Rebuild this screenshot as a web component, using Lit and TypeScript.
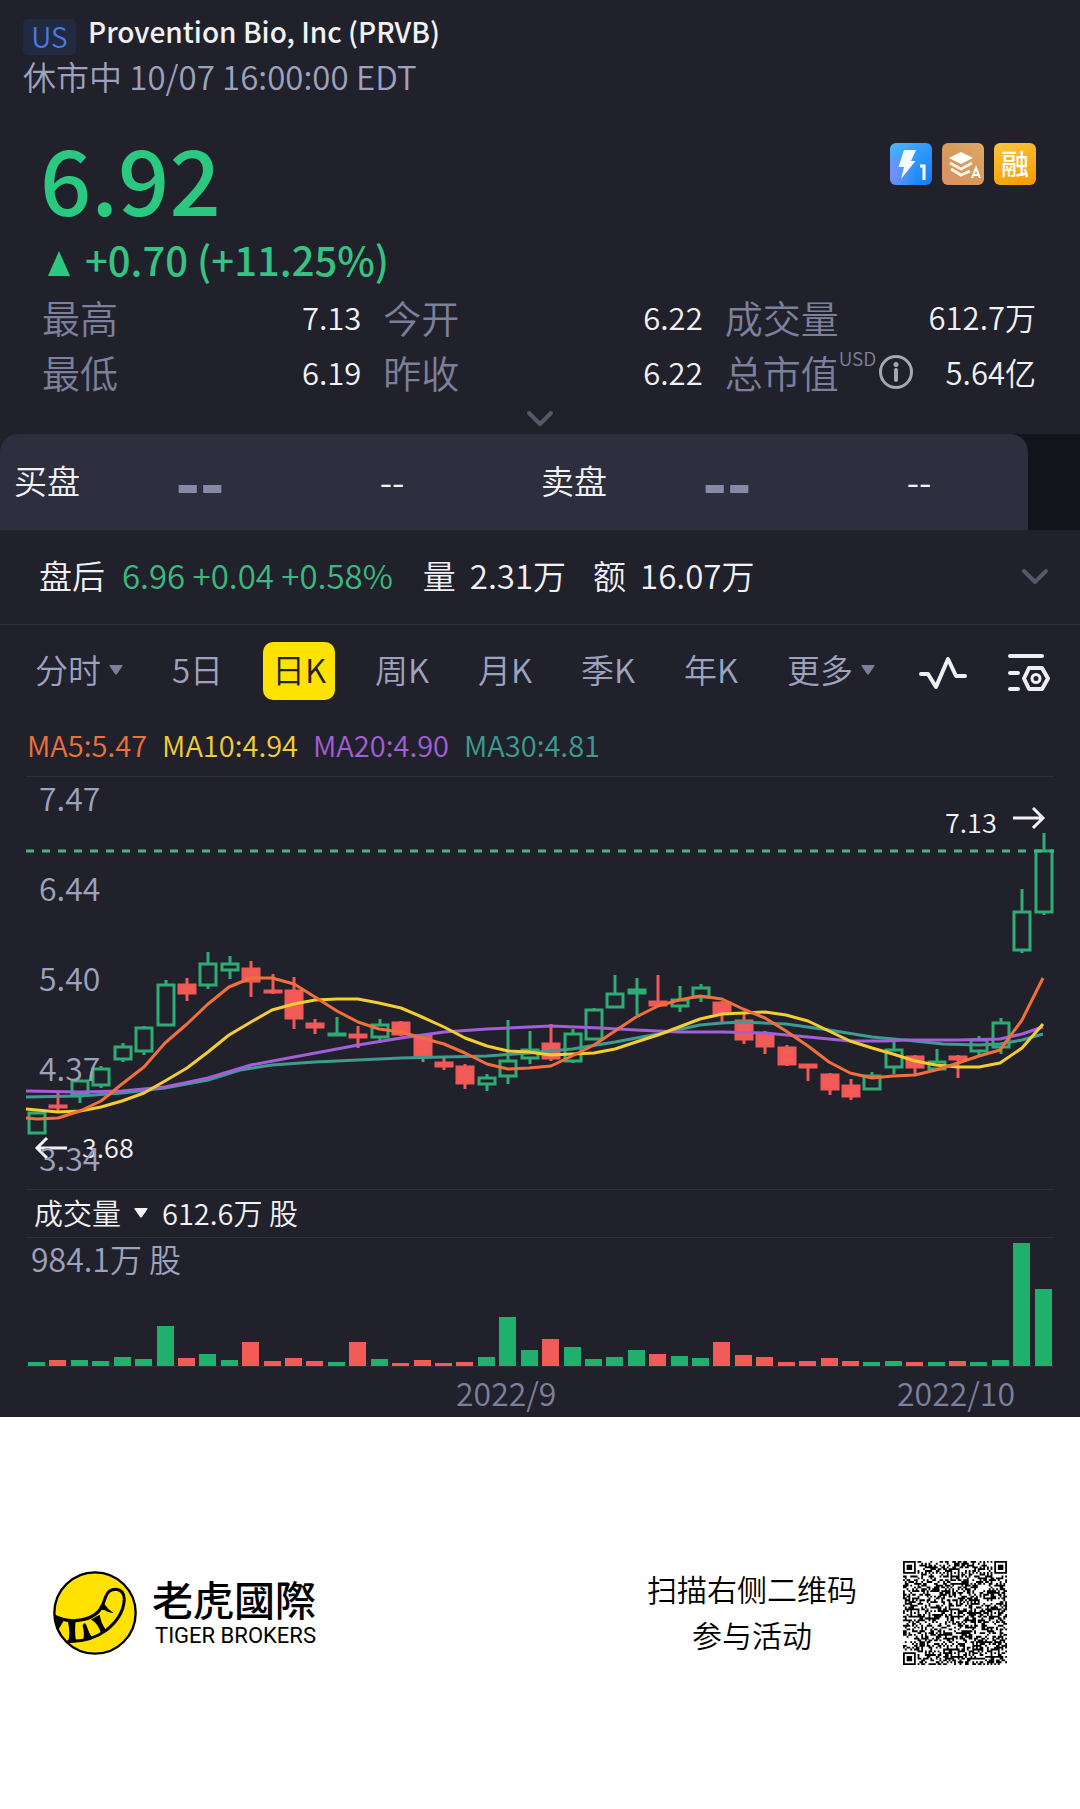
import { LitElement, html, svg, css } from "lit";
import { customElement } from "lit/decorators.js";
import { classMap } from "lit/directives/class-map.js";

type Candle = [up: 0 | 1, high: number, top: number, bottom: number, low: number];

const FIRST_X = 37;
const STEP = 21.42;

const CANDLES: Candle[] = [
  [1, 1112, 1112, 1134, 1134], [0, 1093, 1105, 1107, 1111], [1, 1080, 1080, 1095, 1103],
  [1, 1066, 1068, 1086, 1088], [1, 1043, 1046, 1060, 1062], [1, 1026, 1027, 1052, 1055],
  [1, 980, 984, 1026, 1026], [0, 978, 984, 994, 1001], [1, 952, 963, 986, 989],
  [1, 956, 963, 971, 979], [0, 961, 968, 982, 997], [0, 974, 990, 992, 994],
  [0, 977, 990, 1019, 1029], [0, 1019, 1023, 1028, 1034], [1, 1017, 1033, 1035, 1036],
  [0, 1026, 1034, 1038, 1048], [1, 1019, 1024, 1038, 1041], [0, 1021, 1022, 1035, 1036],
  [0, 1034, 1035, 1056, 1062], [0, 1058, 1062, 1067, 1070], [0, 1064, 1066, 1084, 1089],
  [1, 1074, 1077, 1085, 1091], [1, 1020, 1060, 1077, 1084], [1, 1031, 1049, 1059, 1064],
  [0, 1024, 1043, 1059, 1061], [1, 1029, 1033, 1062, 1063], [1, 1008, 1009, 1040, 1040],
  [1, 975, 993, 1008, 1008], [1, 978, 989, 994, 1015], [0, 975, 1001, 1006, 1007],
  [1, 986, 999, 1007, 1012], [1, 984, 987, 998, 1002], [0, 1001, 1002, 1014, 1022],
  [0, 1014, 1020, 1040, 1044], [0, 1031, 1034, 1047, 1054], [0, 1045, 1047, 1065, 1066],
  [0, 1064, 1064, 1068, 1081], [0, 1073, 1074, 1090, 1095], [0, 1079, 1085, 1097, 1100],
  [1, 1072, 1075, 1090, 1090], [1, 1042, 1049, 1068, 1074], [0, 1055, 1056, 1068, 1074],
  [1, 1049, 1061, 1070, 1071], [0, 1055, 1056, 1060, 1078], [1, 1036, 1039, 1052, 1055],
  [1, 1018, 1022, 1048, 1054], [1, 889, 911, 951, 953], [1, 833, 850, 913, 915],
];

const VOLUMES = [
  4, 6, 6, 5, 9, 7, 40, 8, 12, 6, 24, 5, 8, 5, 4, 24, 7, 3, 6, 3, 4, 9, 49, 16,
  27, 19, 7, 9, 16, 12, 10, 8, 24, 11, 9, 4, 5, 8, 5, 4, 5, 4, 4, 5, 4, 6, 123, 77,
];

const AVERAGES = [
  {
    name: "ma30", label: "MA30:4.81",
    points: "26,1097 80,1096 122,1093 165,1088 208,1080 240,1070 272,1065 315,1062 358,1060 401,1058 444,1057 487,1056 529,1053 572,1049 615,1042 658,1034 700,1025 722,1023 743,1022 786,1024 829,1030 872,1037 915,1041 943,1044 979,1045 1000,1044 1022,1040 1043,1034",
  },
  {
    name: "ma20", label: "MA20:4.90",
    points: "26,1091 80,1092 122,1091 165,1087 208,1078 251,1065 294,1057 337,1049 358,1045 401,1038 444,1032 487,1029 529,1027 551,1026 600,1028 636,1030 679,1032 722,1032 765,1033 808,1037 850,1041 886,1041 905,1040 958,1040 1000,1039 1022,1034 1043,1027",
  },
  {
    name: "ma10", label: "MA10:4.94",
    points: "26,1109 58,1112 80,1111 101,1107 122,1101 144,1093 165,1081 187,1068 208,1052 229,1035 251,1022 272,1010 294,1004 315,1000 337,999 358,999 379,1003 401,1008 422,1017 444,1027 465,1038 487,1046 508,1051 529,1052 551,1055 572,1054 594,1053 615,1049 636,1042 658,1035 679,1027 700,1019 722,1014 743,1013 765,1012 786,1015 808,1021 829,1031 850,1041 872,1048 893,1054 915,1061 936,1065 958,1067 979,1067 1000,1063 1022,1048 1043,1024",
  },
  {
    name: "ma5", label: "MA5:5.47",
    points: "26,1118 37,1119 58,1118 80,1111 101,1101 122,1084 144,1067 165,1043 187,1024 208,1004 229,987 251,978 272,978 294,984 315,997 337,1011 358,1022 379,1029 401,1032 422,1038 444,1044 465,1053 487,1064 508,1069 529,1068 551,1066 572,1056 594,1045 615,1031 636,1017 658,1006 679,1000 700,996 722,999 743,1009 765,1018 786,1031 808,1046 829,1062 850,1073 872,1078 893,1076 915,1075 936,1070 958,1063 979,1056 1000,1050 1022,1020 1043,978",
  },
];

const TABS = [
  { label: "分时", menu: true }, { label: "5日" }, { label: "日K", active: true },
  { label: "周K" }, { label: "月K" }, { label: "季K" }, { label: "年K" },
  { label: "更多", menu: true },
];

const caret = (cls: string) => html`<svg class=${cls} viewBox="0 0 14 10" aria-hidden="true">
  <path d="M1 0h12q1 0 .5 1L8 9q-1 1-2 0L.5 1Q0 0 1 0z" fill="currentColor"/></svg>`;

const chevron = () => html`<svg class="chevron" viewBox="0 0 28 18" aria-hidden="true">
  <path d="M3 3l11 11L25 3" fill="none" stroke="currentColor" stroke-width="4" stroke-linecap="round" stroke-linejoin="round"/></svg>`;

@customElement("price-chart")
export class PriceChart extends LitElement {
  static styles = css`
    :host { display: block; }
    .plot { display: block; width: 100%; height: auto; overflow: visible; font-family: "Noto Sans CJK SC", sans-serif; }
    .up { stroke: #2fab74; fill: none; stroke-width: 3; }
    .down { stroke: #ef5a57; fill: #f35b58; stroke-width: 3; }
    .line { fill: none; stroke-width: 3; stroke-linejoin: round; }
    .ma5 { stroke: #f0703c; }
    .ma10 { stroke: #f3cd33; }
    .ma20 { stroke: #a25fd8; }
    .ma30 { stroke: #3d9c90; }
    .last { stroke: #41b883; stroke-width: 3; stroke-dasharray: 8 8; }
    .axis { font-size: 32px; fill: #9da3bf; font-weight: 350; }
    .mark { font-size: 27px; fill: #f2f2f4; font-weight: 350; }
    .arrow { stroke: #f2f2f4; stroke-width: 3; fill: none; }
  `;

  private candle([up, high, top, bottom, low]: Candle, i: number) {
    const x = Math.round(FIRST_X + STEP * i);
    return svg`<g class=${up ? "up" : "down"}>
      <path d="M${x} ${high}V${top}M${x} ${bottom}V${low}"/>
      <rect x=${x - 8} y=${top + 1} width="16" height=${Math.max(1, bottom - top - 2)}/>
    </g>`;
  }

  render() {
    const levels = ["7.47", "6.44", "5.40", "4.37", "3.34"];
    return html`<svg class="plot" viewBox="26 777 1028 412" role="img" aria-label="日K">
      ${CANDLES.map((c, i) => this.candle(c, i))}
      <path class="last" d="M26 851H1054"/>
      ${AVERAGES.map((m) => svg`<polyline class="line ${m.name}" points=${m.points}/>`)}
      <path class="arrow" d="M67 1148H37M47 1138L37 1148L47 1158"/>
      <text class="mark" x="82" y="1158">3.68</text>
      <path class="arrow" d="M1013 818H1043M1033 808L1043 818L1033 828"/>
      <text class="mark" x="945" y="833">7.13</text>
      ${levels.map((t, i) => svg`<text class="axis" x="39" y=${811 + 90 * i}>${t}</text>`)}
    </svg>`;
  }
}

@customElement("volume-chart")
export class VolumeChart extends LitElement {
  static styles = css`
    :host { display: block; }
    .plot { display: block; width: 100%; height: auto; overflow: visible; font-family: "Noto Sans CJK SC", sans-serif; }
    .up { fill: #1fb06e; }
    .down { fill: #f35b58; }
    .base { stroke: #2e2f3d; }
    .peak { font-size: 32px; fill: #9da3bf; font-weight: 350; }
    .date { font-size: 32px; fill: #7c809b; font-weight: 350; }
  `;

  render() {
    return html`<svg class="plot" viewBox="26 1238 1028 179" role="img" aria-label="成交量">
      <path class="base" d="M26 1366.5H1054"/>
      ${VOLUMES.map((h, i) => svg`<rect class=${CANDLES[i][0] ? "up" : "down"}
        x=${Math.round(FIRST_X + STEP * i) - 9} y=${1366 - h} width="17" height=${h}/>`)}
      <text class="peak" x="31" y="1272">984.1万 股</text>
      <text class="date" x="456" y="1406">2022/9</text>
      <text class="date" x="897" y="1406">2022/10</text>
    </svg>`;
  }
}

@customElement("qr-code")
export class QrCode extends LitElement {
  static styles = css`
    :host { display: block; }
    .code { display: block; width: 104px; height: 104px; }
  `;

  private cells(): string {
    const n = 57;
    const centres = [6, 28, 50];
    const inFinder = (r: number, c: number) =>
      (r < 8 && c < 8) || (r < 8 && c > n - 9) || (r > n - 9 && c < 8);
    const finder = (r: number, c: number) => {
      const y = r < 8 ? r : r - (n - 7);
      const x = c < 8 ? c : c - (n - 7);
      if (y < 0 || x < 0 || y > 6 || x > 6) return false;
      const d = Math.max(Math.abs(y - 3), Math.abs(x - 3));
      return d !== 2;
    };
    let seed = 20221007;
    let path = "";
    for (let r = 0; r < n; r++) {
      for (let c = 0; c < n; c++) {
        seed = (Math.imul(seed, 1664525) + 1013904223) >>> 0;
        let on = ((seed >>> 16) & 1) === 1;
        if (r === 6 || c === 6) on = (r + c) % 2 === 0;
        for (const a of centres)
          for (const b of centres) {
            const d = Math.max(Math.abs(r - a), Math.abs(c - b));
            if (d < 3 && !inFinder(a, b)) on = d !== 1;
          }
        if (inFinder(r, c)) on = finder(r, c);
        if (on) path += `M${c} ${r}h1v1h-1z`;
      }
    }
    return path;
  }

  render() {
    return html`<svg class="code" viewBox="0 0 57 57" role="img" aria-label="二维码">
      <path d=${this.cells()} fill="#000"/></svg>`;
  }
}

@customElement("app-root")
export class AppRoot extends LitElement {
  static styles = css`
    :host { display: block; background: #fff; font-family: "Noto Sans CJK SC", sans-serif; font-weight: 350; }
    button { font: inherit; color: inherit; background: none; border: 0; margin: 0; padding: 0; display: flex; align-items: center; }
    h1, dl, dd, dt, p { margin: 0; font-weight: inherit; }
    .panel { background: #21212b; color: #f2f2f4; }
    .head { padding: 7px 23px 0; }
    .title { display: flex; height: 48px; align-items: flex-end; gap: 12px; }
    .market { width: 53px; height: 36px; border-radius: 5px; background: #212a40; color: #4a7be0; font-size: 28px; line-height: 34px; text-align: center; }
    .name { font-size: 28px; line-height: 48px; font-weight: 500; }
    .status { font-size: 33px; line-height: 42px; color: #9da3bf; }
    .quote { display: flex; justify-content: space-between; align-items: flex-start; padding: 35px 44px 0 40px; }
    .price { font-size: 90px; line-height: 90px; font-weight: 500; color: #2bc880; }
    .tags { display: flex; gap: 10px; padding-top: 11px; }
    .tag { display: block; width: 42px; height: 42px; border-radius: 6px; }
    .margin { background: linear-gradient(160deg, #fcc43c, #f59a00); font-size: 28px; line-height: 40px; font-weight: 500; text-align: center; color: #fff; }
    .change { display: flex; align-items: center; gap: 14px; padding: 0 48px; margin-top: 12px; font-size: 40px; line-height: 50px; font-weight: 500; color: #35c383; }
    .rise { width: 23px; height: 25px; margin-top: 8px; }
    .stats { display: grid; grid-template-columns: repeat(3, 1fr); column-gap: 22px; padding: 0 36px 0 42px; margin-top: 5px; }
    .stat { display: flex; align-items: center; height: 55px; }
    .stat dt { display: flex; align-items: center; font-size: 38px; line-height: 55px; color: #7c809b; }
    .stat dd { margin-left: auto; font-size: 31px; line-height: 55px; }
    .stat:nth-child(3n) dd { padding-right: 8px; }
    .unit { align-self: flex-start; font-size: 19px; line-height: 28px; }
    .info { width: 36px; height: 36px; margin-left: 2px; color: #a5a6b0; }
    .expand { display: flex; width: 100%; height: 35px; padding-top: 4px; justify-content: center; color: #55586a; }
    .chevron { width: 28px; height: 18px; }
    .book { display: flex; height: 96px; background: linear-gradient(#21212b, #21212b) left / 50% 100% no-repeat, #14141c; }
    .sides { flex: 1; display: flex; justify-content: space-between; padding: 0 13px 4px 14px; background: #2d2e3e; border-radius: 18px 18px 0 0; }
    .rest { width: 52px; }
    .side { flex: 0 1 474px; display: grid; grid-template-columns: 90fr 192fr 192fr; align-items: center; font-size: 33px; }
    .dash { display: flex; justify-content: center; font-size: 36px; }
    .size { color: #868aa6; font-weight: 900; font-size: 64px; line-height: 64px; }
    .after { display: flex; align-items: center; height: 90px; padding: 0 31px 4px 39px; border-bottom: 1px solid #2e2f3d; font-size: 33px; white-space: nowrap; }
    .gain { color: #3cb97e; margin: 0 30px 0 17px; }
    .pair { display: flex; gap: 14px; margin-right: 27px; }
    .after .open { margin-left: auto; padding-top: 4px; color: #55586a; }
    .tabs { display: flex; justify-content: space-between; align-items: center; padding: 17px 30px 0 26px; color: #9da3bf; font-size: 33px; }
    .tab { height: 58px; padding: 0 9px 4px; gap: 8px; border-radius: 10px; white-space: nowrap; }
    .active { background: #ffe200; color: #21212b; }
    .caret { width: 14px; height: 10px; margin-top: 2px; color: #7c809b; }
    .pulse { width: 48px; height: 34px; color: #efeff2; }
    .gear { width: 42px; height: 38px; color: #efeff2; }
    .tool { margin-left: 4px; padding-top: 4px; }
    .tool + .tool { margin-left: 10px; }
    .averages { display: flex; gap: 15px; padding: 24px 27px 12px; font-size: 29px; line-height: 40px; }
    .ma5 { color: #f0703c; order: 1; }
    .ma10 { color: #f3cd33; order: 2; }
    .ma20 { color: #a25fd8; order: 3; }
    .ma30 { color: #3d9c90; order: 4; }
    .framed { margin: 0 26px; border-top: 1px solid #2e2f3d; }
    .volume { display: flex; align-items: center; height: 43px; font-size: 29px; padding: 0 0 4px 8px; gap: 14px; }
    .volume button { gap: 13px; }
    .volume .caret { color: #f2f2f4; }
    .foot { display: flex; align-items: center; padding: 144px 73px 144px 53px; color: #000; }
    .logo { width: 84px; height: 84px; }
    .brand { margin-left: 15px; padding-top: 2px; }
    .cn { font-family: "Noto Sans CJK TC", sans-serif; font-size: 41px; line-height: 44px; font-weight: 500; }
    .en { font-family: Roboto, sans-serif; font-size: 22px; line-height: 32px; font-weight: 400; padding-left: 3px; }
    .scan { margin-left: auto; margin-right: 46px; padding-bottom: 4px; font-size: 30px; line-height: 46px; text-align: center; }
  `;

  private stat(label: string, value: string, extra: unknown = "") {
    return html`<div class="stat"><dt>${label}${extra}</dt><dd>${value}</dd></div>`;
  }

  private side(label: string) {
    return html`<div class="side"><span>${label}</span><span class="dash size">--</span><span class="dash">--</span></div>`;
  }

  render() {
    return html`
      <main class="panel">
        <header class="head">
          <div class="title"><span class="market">US</span><h1 class="name">Provention Bio, Inc (PRVB)</h1></div>
          <p class="status">休市中 10/07 16:00:00 EDT</p>
        </header>
        <section class="quote">
          <span class="price">6.92</span>
          <div class="tags">
            <svg class="tag" viewBox="0 0 42 42" aria-hidden="true">
              <defs>
                <linearGradient id="b" x1="0" y1="0" x2="1" y2="1"><stop offset="0" stop-color="#4db8fb"/><stop offset="1" stop-color="#1479f8"/></linearGradient>
                <radialGradient id="v" cx="0" cy=".75" r=".6"><stop offset="0" stop-color="#7d8cff"/><stop offset="1" stop-color="#7d8cff" stop-opacity="0"/></radialGradient>
              </defs>
              <rect width="42" height="42" fill="url(#b)"/><rect width="42" height="42" fill="url(#v)"/>
              <path d="M14 7H26L21 18H25.500L11 36L14 24H8.500Z" fill="#f4faff"/>
              <path d="M30 23h4v14" fill="none" stroke="#fff" stroke-width="3"/>
            </svg>
            <svg class="tag" viewBox="0 0 42 42" aria-hidden="true">
              <defs><linearGradient id="o" x1="1" y1="0" x2="0" y2="1"><stop offset="0" stop-color="#e0a865"/><stop offset=".5" stop-color="#d69a5c"/><stop offset="1" stop-color="#db9068"/></linearGradient></defs>
              <rect width="42" height="42" fill="url(#o)"/>
              <path d="M19 9L31 15L19 21L7 15Z" fill="#fff"/>
              <path d="M8 20l11 6 11-6M9 26l10 6 9-4" fill="none" stroke="#fff3e4" stroke-width="3"/>
              <path d="M30 35l4-10 4 10M31 32h6" fill="none" stroke="#fff" stroke-width="2"/>
            </svg>
            <span class="tag margin">融</span>
          </div>
        </section>
        <p class="change">
          <svg class="rise" viewBox="0 0 23 25" aria-hidden="true"><path d="M11 0L22 25H0Z" fill="#2bc880"/></svg>
          <span>+0.70 (+11.25%)</span>
        </p>
        <dl class="stats">
          ${this.stat("最高", "7.13")}${this.stat("今开", "6.22")}${this.stat("成交量", "612.7万")}
          ${this.stat("最低", "6.19")}${this.stat("昨收", "6.22")}
          ${this.stat("总市值", "5.64亿", html`<span class="unit">USD</span>
            <svg class="info" viewBox="0 0 36 36" aria-hidden="true"><circle cx="18" cy="18" r="15.500" fill="none" stroke="currentColor" stroke-width="3"/><circle cx="18" cy="10.500" r="2.500" fill="currentColor"/><path d="M18 16v10" stroke="currentColor" stroke-width="4" stroke-linecap="round"/></svg>`)}
        </dl>
        <button class="expand" aria-label="展开">${chevron()}</button>
        <section class="book">
          <div class="sides">${this.side("买盘")}${this.side("卖盘")}</div>
          <div class="rest"></div>
        </section>
        <section class="after">
          <span>盘后</span><span class="gain">6.96 +0.04 +0.58%</span>
          <span class="pair"><span>量</span><span>2.31万</span></span>
          <span class="pair"><span>额</span><span>16.07万</span></span>
          <button class="open" aria-label="展开盘后">${chevron()}</button>
        </section>
        <nav class="tabs">
          ${TABS.map((t) => html`<button class=${classMap({ tab: true, active: !!t.active })}>${t.label}${t.menu ? caret("caret") : ""}</button>`)}
          <button class="tool" aria-label="指标">
            <svg class="pulse" viewBox="0 0 48 34" aria-hidden="true"><path d="M2 18H9L17 31L29 3L37 20H46" fill="none" stroke="currentColor" stroke-width="4" stroke-linecap="round" stroke-linejoin="round"/></svg>
          </button>
          <button class="tool" aria-label="设置">
            <svg class="gear" viewBox="0 0 42 38" aria-hidden="true" fill="none" stroke="currentColor" stroke-width="4" stroke-linecap="round" stroke-linejoin="round">
              <path d="M2 2H34M2 19H10M2 35H10M21 14H34L40 24.500L34 35H21L16 24.500Z"/><circle cx="28" cy="24.500" r="4" stroke-width="3"/>
            </svg>
          </button>
        </nav>
        <div class="averages">${AVERAGES.map((m) => html`<span class=${m.name}>${m.label}</span>`)}</div>
        <div class="framed"><price-chart></price-chart></div>
        <div class="framed volume"><button>成交量${caret("caret")}</button><span>612.6万 股</span></div>
        <div class="framed"><volume-chart></volume-chart></div>
      </main>
      <footer class="foot">
        <svg class="logo" viewBox="69 92 250 250" aria-hidden="true">
          <defs><clipPath id="disc"><circle cx="194" cy="217" r="121"/></clipPath></defs>
          <circle cx="194" cy="217" r="121" fill="#ffe200"/>
          <g clip-path="url(#disc)">
            <path d="M68 224Q100 240 130 240Q185 238 208 208Q219 192 226 168Q234 146 256 146Q282 148 281 178Q278 228 228 268Q180 304 112 302" fill="none" stroke="#000" stroke-width="9"/>
            <path d="M66 222L102 238L84 268ZM112 238H137Q132 270 138 304H114Q122 270 112 238ZM157 254Q165 240 170 258Q176 278 188 294L158 300Q164 278 157 254ZM182 236L208 222Q212 250 228 268L212 278Q204 248 182 236ZM208 208L222 190Q232 206 250 218Q232 216 222 208Z" fill="#000"/>
          </g>
          <circle cx="194" cy="217" r="121" fill="none" stroke="#000" stroke-width="7"/>
        </svg>
        <div class="brand"><div class="cn">老虎國際</div><div class="en">TIGER BROKERS</div></div>
        <p class="scan">扫描右侧二维码<br />参与活动</p>
        <qr-code></qr-code>
      </footer>
    `;
  }
}
